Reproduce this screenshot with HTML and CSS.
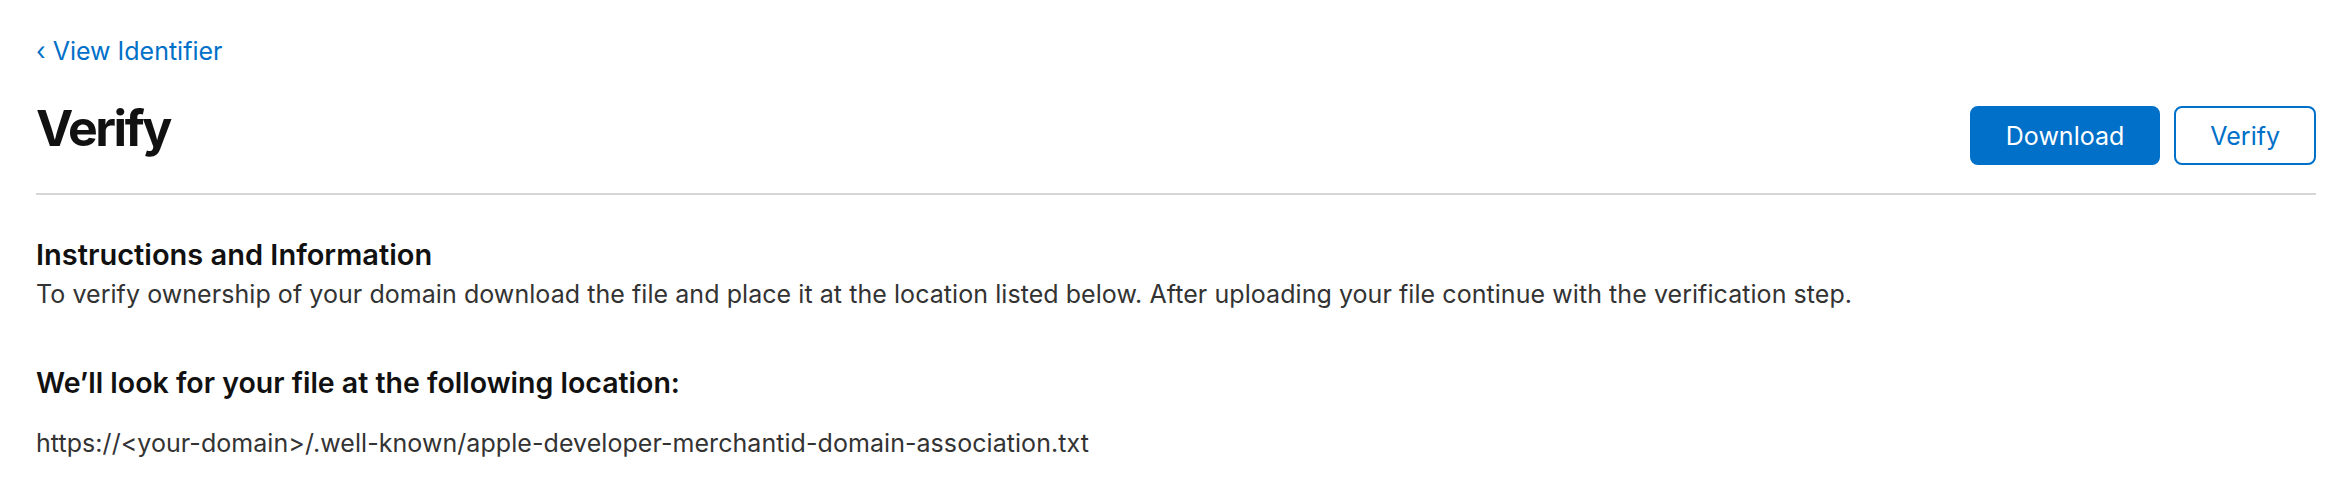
FILE: index.html
```html
<!DOCTYPE html>
<html lang="en">
<head>
	<meta charset="UTF-8">
	<title>Verify</title>
	<link rel="stylesheet" href="styles.css">
</head>
<body>
	<div class="page">
		<a class="back" href="#">&lsaquo; View Identifier</a>

		<div class="header">
			<h1>Verify</h1>
			<div class="actions">
				<button class="btn primary">Download</button>
				<button class="btn">Verify</button>
			</div>
		</div>

		<div class="section">
			<h2>Instructions and Information</h2>
			<p>To verify ownership of your domain download the file and place it at the location listed below. After uploading your file continue with the verification step.</p>
		</div>

		<div class="section second">
			<h2 class="loc">We’ll look for your file at the following location:</h2>
			<p class="path">https://&lt;your-domain&gt;/.well-known/apple-developer-merchantid-domain-association.txt</p>
		</div>
	</div>
</body>
</html>
```

FILE: styles.css
```css
*{
	margin: 0;
	padding: 0;
	box-sizing: border-box;
}
body{
	background: #fff;
	font-family: Inter, "Liberation Sans", sans-serif;
	color: #333;
}
.page{
	padding: 33px 28px 0 36px;
}
.back{
	display: inline-block;
	font-size: 25px;
	line-height: 36px;
	color: #0070c9;
	text-decoration: none;
}
.header{
	display: flex;
	align-items: flex-end;
	justify-content: space-between;
	padding: 29px 0 28px;
	border-bottom: 2px solid #d6d6d6;
}
.header h1{
	font-size: 50px;
	line-height: 60px;
	font-weight: 700;
	letter-spacing: -2.4px;
	color: #111;
	margin-bottom: 7px;
}
.actions{
	display: flex;
	gap: 14px;
}
.btn{
	height: 59px;
	padding: 0 34px;
	font-family: inherit;
	font-size: 25px;
	border-radius: 8px;
	border: 2px solid #0070c9;
	background: #fff;
	color: #0070c9;
	cursor: pointer;
}
.btn.primary{
	background: #0070c9;
	color: #fff;
}
.section{
	margin-top: 42px;
}
.section.second{
	margin-top: 53px;
}
.section h2{
	font-size: 29px;
	line-height: 36px;
	font-weight: 600;
	color: #111;
}
.section p{
	font-size: 25px;
	line-height: 36px;
	letter-spacing: 0.06px;
	margin-top: 3px;
}
.section h2.loc{
	font-size: 28.5px;
	margin-bottom: 24px;
}
```
